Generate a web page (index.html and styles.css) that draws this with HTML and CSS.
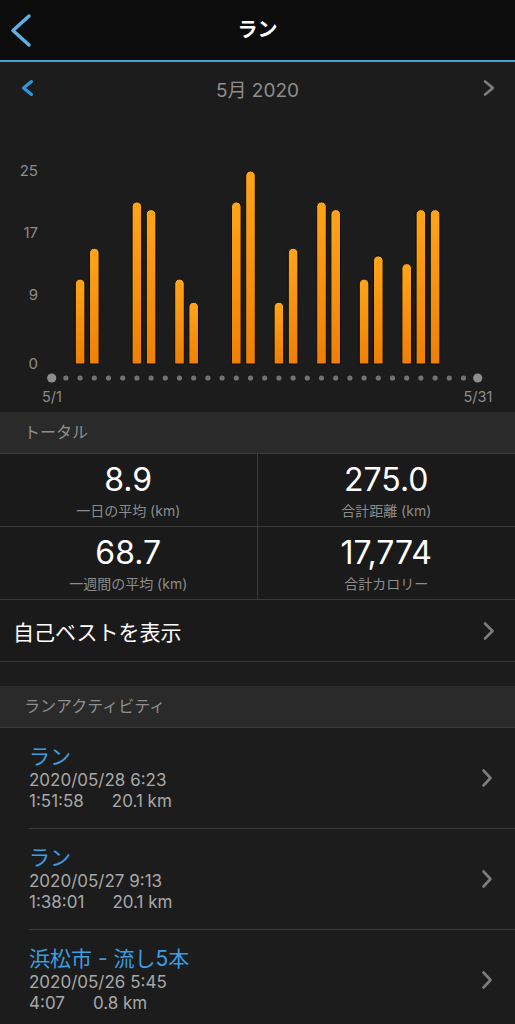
FILE: index.html
```html
<!DOCTYPE html>
<html lang="ja">
<head>
  <meta charset="UTF-8" />
  <meta name="viewport" content="width=device-width, initial-scale=1.0"/>
  <title>ラン</title>
  <link rel="stylesheet" href="styles.css">
</head>
<body>
  <header class="navbar">
    <svg class="back" width="24" height="36" viewBox="0 0 24 36"><polyline points="20,4 4,18.5 20,33" /></svg>
    <h1>ラン</h1>
    <span></span>
  </header>

  <div class="month-nav">
    <svg class="chev blue" width="16" height="20" viewBox="0 0 16 20"><polyline points="11.5,3.5 3.5,10 11.5,16.5" /></svg>
    <span class="month">5月 2020</span>
    <svg class="chev" width="16" height="20" viewBox="0 0 16 20"><polyline points="6,3.5 14,10 6,16.5" /></svg>
  </div>

  <div class="chart">
    <svg width="515" height="298" viewBox="0 114 515 298">
      <defs>
        <linearGradient id="bar" x1="0" y1="0" x2="0" y2="1">
          <stop offset="0" stop-color="#ffa41a" />
          <stop offset="1" stop-color="#ee8005" />
        </linearGradient>
      </defs>
      <text class="axis" x="38" y="176.4" text-anchor="end">25</text>
      <text class="axis" x="38" y="238.2" text-anchor="end">17</text>
      <text class="axis" x="38" y="299.9" text-anchor="end">9</text>
      <text class="axis" x="38" y="369.4" text-anchor="end">0</text>

      <g class="bars">
        <path d="M75.3 364V283.9a4.8 4.8 0 0 1 9.6 0V364Z" />
        <path d="M89.5 364V253a4.8 4.8 0 0 1 9.6 0V364Z" />
        <path d="M132.1 364V206.7a4.8 4.8 0 0 1 9.6 0V364Z" />
        <path d="M146.3 364V214.4a4.8 4.8 0 0 1 9.6 0V364Z" />
        <path d="M174.7 364V283.9a4.8 4.8 0 0 1 9.6 0V364Z" />
        <path d="M188.9 364V307a4.8 4.8 0 0 1 9.6 0V364Z" />
        <path d="M231.5 364V206.7a4.8 4.8 0 0 1 9.6 0V364Z" />
        <path d="M245.7 364V175.8a4.8 4.8 0 0 1 9.6 0V364Z" />
        <path d="M274.1 364V307a4.8 4.8 0 0 1 9.6 0V364Z" />
        <path d="M288.3 364V253a4.8 4.8 0 0 1 9.6 0V364Z" />
        <path d="M316.7 364V206.7a4.8 4.8 0 0 1 9.6 0V364Z" />
        <path d="M330.9 364V214.4a4.8 4.8 0 0 1 9.6 0V364Z" />
        <path d="M359.3 364V283.9a4.8 4.8 0 0 1 9.6 0V364Z" />
        <path d="M373.5 364V260.7a4.8 4.8 0 0 1 9.6 0V364Z" />
        <path d="M401.9 364V268.4a4.8 4.8 0 0 1 9.6 0V364Z" />
        <path d="M416.1 364V214.4a4.8 4.8 0 0 1 9.6 0V364Z" />
        <path d="M430.3 364V214.4a4.8 4.8 0 0 1 9.6 0V364Z" />
      </g>

      <!-- one dot per day -->
      <line class="days" x1="65.9" y1="378" x2="463.6" y2="378" />
      <circle class="day-end" cx="51.7" cy="378" r="4.6" />
      <circle class="day-end" cx="477.7" cy="378" r="4.6" />
      <text class="axis small" x="52" y="402" text-anchor="middle">5/1</text>
      <text class="axis small" x="478" y="402" text-anchor="middle">5/31</text>
    </svg>
  </div>

  <div class="section-head">トータル</div>
  <div class="stats">
    <div class="stat">
      <div class="value">8.9</div>
      <div class="label">一日の平均 (km)</div>
    </div>
    <div class="stat">
      <div class="value">275.0</div>
      <div class="label">合計距離 (km)</div>
    </div>
    <div class="stat">
      <div class="value">68.7</div>
      <div class="label">一週間の平均 (km)</div>
    </div>
    <div class="stat">
      <div class="value">17,774</div>
      <div class="label">合計カロリー</div>
    </div>
  </div>

  <div class="row-link">
    <span>自己ベストを表示</span>
    <svg class="chev" width="16" height="20" viewBox="0 0 16 20"><polyline points="5,2.5 12.5,10 5,17.5" /></svg>
  </div>

  <div class="spacer"></div>

  <div class="section-head">ランアクティビティ</div>
  <ul class="activities">
    <li class="activity">
      <div class="info">
        <div class="title">ラン</div>
        <div class="date">2020/05/28 6:23</div>
        <div class="meta"><span>1:51:58</span><span>20.1 km</span></div>
      </div>
      <svg class="chev" width="16" height="20" viewBox="0 0 16 20"><polyline points="4.5,2.5 11.5,10 4.5,17.5" /></svg>
    </li>
    <li class="activity">
      <div class="info">
        <div class="title">ラン</div>
        <div class="date">2020/05/27 9:13</div>
        <div class="meta"><span>1:38:01</span><span>20.1 km</span></div>
      </div>
      <svg class="chev" width="16" height="20" viewBox="0 0 16 20"><polyline points="4.5,2.5 11.5,10 4.5,17.5" /></svg>
    </li>
    <li class="activity">
      <div class="info">
        <div class="title">浜松市 - 流し5本</div>
        <div class="date">2020/05/26 5:45</div>
        <div class="meta"><span>4:07</span><span>0.8 km</span></div>
      </div>
      <svg class="chev" width="16" height="20" viewBox="0 0 16 20"><polyline points="4.5,2.5 11.5,10 4.5,17.5" /></svg>
    </li>
  </ul>
</body>
</html>
```

FILE: styles.css
```css
body {
  margin: 0;
  background: #1c1c1c;
  color: #fff;
  font-family: Inter, "Noto Sans CJK JP", sans-serif;
  overflow: hidden;
}
svg polyline {
  fill: none;
  stroke-linecap: round;
  stroke-linejoin: round;
}
.navbar {
  display: grid;
  grid-template-columns: 1fr auto 1fr;
  align-items: center;
  height: 60px;
  background: #0c0c0c;
  border-bottom: 2px solid #4aa0db;
}
.navbar h1 {
  margin: 0;
  font-size: 20px;
  font-weight: 700;
  line-height: 60px;
}
.back {
  margin-left: 9px;
}
.back polyline {
  stroke: #5cb2e8;
  stroke-width: 3.5;
}
.chev polyline {
  stroke: #7d7d7d;
  stroke-width: 2.6;
}
.chev.blue polyline {
  stroke: #2d97db;
  stroke-width: 3;
}
.month-nav {
  display: flex;
  align-items: center;
  justify-content: space-between;
  height: 52px;
  padding: 0 20px;
}
.month {
  font-size: 19px;
  color: #8e8e8e;
}
.chart svg {
  display: block;
}
.axis {
  font-family: Inter, sans-serif;
  font-size: 15px;
  fill: #8c8c8c;
}
.axis.small {
  font-size: 14.5px;
}
.bars path {
  fill: url(#bar);
  stroke: #0c0c0c;
  stroke-width: 1;
}
.days {
  stroke: #727272;
  stroke-width: 5.2;
  stroke-linecap: round;
  stroke-dasharray: 0 14.2;
}
.day-end {
  fill: #8e8e8e;
}
.section-head {
  height: 41px;
  line-height: 41px;
  padding-left: 24px;
  background: #2a2a2a;
  border-bottom: 1px solid #3d3d3d;
  color: #8e8e8e;
  font-size: 16px;
}
.stats {
  display: grid;
  grid-template-columns: 1fr 1fr;
  background: #1a1a1a;
}
.stat {
  height: 73px;
  box-sizing: border-box;
  padding-top: 8px;
  border-bottom: 1px solid #3b3b3b;
  text-align: center;
}
.stat:nth-child(odd) {
  border-right: 1px solid #3b3b3b;
}
.value {
  font-size: 32px;
  line-height: 36px;
}
.label {
  margin-top: 4px;
  font-size: 14px;
  line-height: 18px;
  color: #8c8c8c;
}
.row-link {
  display: flex;
  align-items: center;
  justify-content: space-between;
  height: 62px;
  box-sizing: border-box;
  padding: 0 19px 0 13px;
  background: #1a1a1a;
  border-bottom: 1px solid #3b3b3b;
  font-size: 21px;
}
.spacer {
  height: 24px;
}
.activities {
  list-style: none;
  margin: 0;
  padding: 0;
}
.activity {
  display: flex;
  align-items: center;
  justify-content: space-between;
  margin-left: 29px;
  padding: 15px 20px 16px 0;
  border-bottom: 1px solid #3b3b3b;
}
.title {
  font-size: 21px;
  line-height: 27px;
  color: #3d9de0;
}
.date, .meta {
  font-size: 17px;
  line-height: 21px;
  color: #a8a8a8;
}
.meta span {
  margin-right: 28px;
}
```
